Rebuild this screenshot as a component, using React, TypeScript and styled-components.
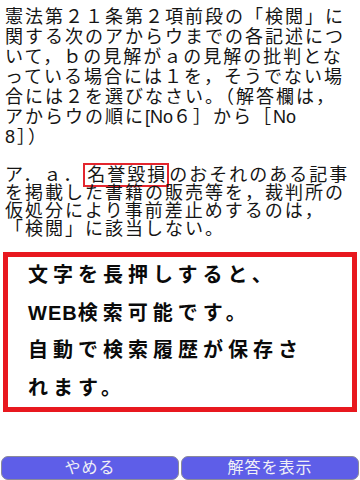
import React from "react";
import styled, { createGlobalStyle } from "styled-components";

const Global = createGlobalStyle`
  html, body { margin: 0; padding: 0; background: #ffffff; }
  body { font-family: "Liberation Sans", "Noto Sans CJK JP", sans-serif; }
  * { box-sizing: border-box; }
`;

const Page = styled.div`
  width: 360px;
  height: 480px;
  display: flex;
  flex-direction: column;
  background: #fff;
  overflow: hidden;
`;

const Question = styled.div`
  padding: 7px 0 0 5px;
  color: #151515;
  font-size: 18px;
  letter-spacing: 2px;
`;

const Paragraph = styled.p<{ $lh: number; $gap?: number }>`
  margin: ${(p) => p.$gap ?? 0}px 0 0 0;
  line-height: ${(p) => p.$lh}px;
`;

const Line = styled.span`
  display: block;
  white-space: nowrap;
`;

const Latin = styled.span<{ $ls: number }>`
  letter-spacing: ${(p) => p.$ls}px;
`;

const Marked = styled.span`
  border: 2px solid #e3262e;
  padding: 0 0 0 2px;
`;

const Notice = styled.div`
  margin: 14px 3px 0 3px;
  height: 160px;
  border: 5px solid #e8181f;
  padding: 0 0 0 20px;
  color: #0a0a0a;
  font-weight: 700;
  font-size: 20px;
  letter-spacing: 5px;
  line-height: 37.5px;
`;

const Spacer = styled.div`
  flex: 1;
`;

const ButtonBar = styled.div`
  display: grid;
  grid-template-columns: 1fr 1fr;
  gap: 2px;
  padding: 0 1px;
`;

const Button = styled.button`
  height: 24px;
  border: 1px solid #8a8a9a;
  border-radius: 7px;
  background: #5e5ee8;
  color: #f0f0f6;
  font-family: "Liberation Sans", "Noto Sans CJK JP", sans-serif;
  font-size: 16px;
  letter-spacing: 1px;
  padding: 0;
  line-height: 22px;
`;

export default function App() {
  return (
    <>
      <Global />
      <Page>
        <Question>
          <Paragraph $lh={20}>
            <Line>憲法第２１条第２項前段の「検閲」に</Line>
            <Line>関する次のアからウまでの各記述につ</Line>
            <Line>いて，ｂの見解がａの見解の批判とな</Line>
            <Line>っている場合には１を，そうでない場</Line>
            <Line>合には２を選びなさい。（解答欄は，</Line>
            <Line>
              アからウの順に<Latin $ls={0}>[No</Latin>６］から［<Latin $ls={0}>No</Latin>
            </Line>
            <Line>8］）</Line>
          </Paragraph>
          <Paragraph $lh={18} $gap={19}>
            <Line>
              ア．ａ．<Marked>名誉毀損</Marked>のおそれのある記事
            </Line>
            <Line>を掲載した書籍の販売等を，裁判所の</Line>
            <Line>仮処分により事前差止めするのは，</Line>
            <Line>「検閲」に該当しない。</Line>
          </Paragraph>
        </Question>
        <Notice>
          <Line>文字を長押しすると、</Line>
          <Line>
            <Latin $ls={1}>WEB</Latin>検索可能です。
          </Line>
          <Line>自動で検索履歴が保存さ</Line>
          <Line>れます。</Line>
        </Notice>
        <Spacer />
        <ButtonBar>
          <Button>やめる</Button>
          <Button>解答を表示</Button>
        </ButtonBar>
      </Page>
    </>
  );
}
